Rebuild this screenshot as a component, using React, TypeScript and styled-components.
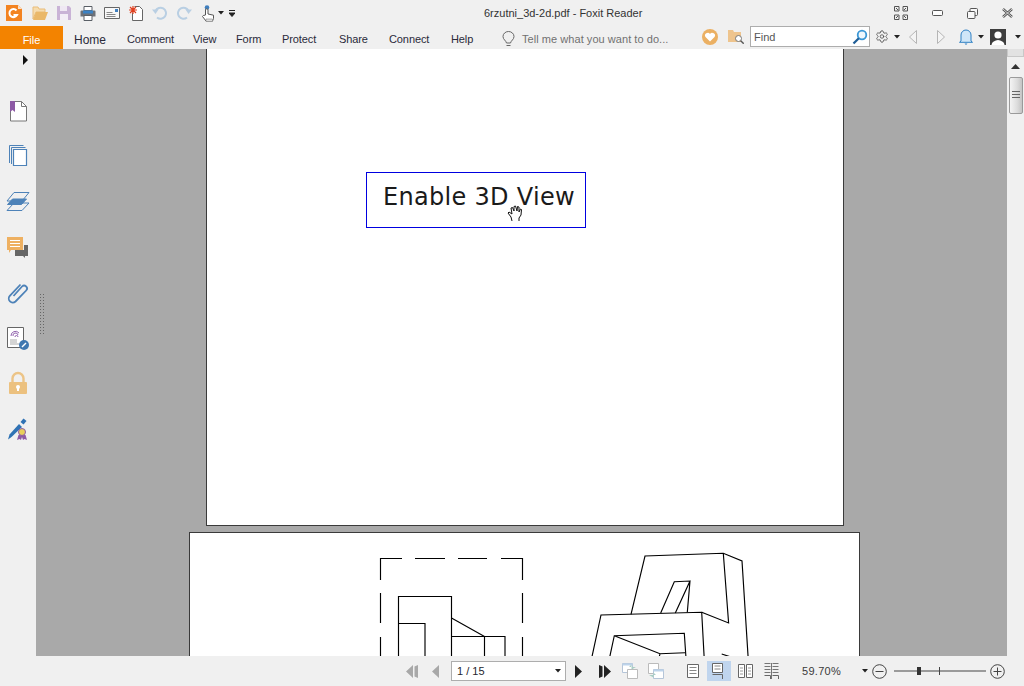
import React from 'react';
import styled, { createGlobalStyle } from 'styled-components';
import { Settings } from 'lucide-react';

const GlobalStyle = createGlobalStyle`
  html, body {
    margin: 0;
    padding: 0;
    height: 100%;
    overflow: hidden;
    background: #f0f0f0;
    font-family: "Liberation Sans", Arial, sans-serif;
  }
  #root { height: 100%; }
`;

const Window = styled.div`
  width: 1024px;
  height: 686px;
  display: flex;
  flex-direction: column;
  background: #f0f0f0;
  color: #2c2c2c;
  font-size: 11px;
`;

const TitleBar = styled.div`
  height: 26px;
  flex: none;
  display: flex;
  align-items: center;
  padding-left: 6px;
`;

const Slot = styled.div<{ $w?: number; $mr?: number }>`
  width: ${(p) => p.$w ?? 16}px;
  height: 20px;
  margin-right: ${(p) => p.$mr ?? 8}px;
  flex: none;
  display: flex;
  align-items: center;
  justify-content: center;
`;

const DocTitle = styled.div`
  margin-left: 249px;
  width: 200px;
  color: #333;
  white-space: nowrap;
`;

const WindowControls = styled.div`
  margin-left: auto;
  display: flex;
  align-items: center;
  height: 20px;
  padding-right: 11px;
  gap: 24px;
`;

const MenuBar = styled.div`
  height: 23px;
  flex: none;
  display: flex;
  align-items: center;
`;

const FileTab = styled.div`
  width: 63px;
  height: 23px;
  padding-top: 4px;
  box-sizing: border-box;
  background: #f38300;
  color: #fff;
  display: flex;
  align-items: center;
  justify-content: center;
`;

const Tabs = styled.div`
  display: flex;
  padding: 4px 0 0 11px;
`;

const Tab = styled.div<{ $w: number; $active?: boolean }>`
  width: ${(p) => p.$w}px;
  font-size: ${(p) => (p.$active ? 12 : 11)}px;
  letter-spacing: ${(p) => (p.$active ? 0 : -0.1)}px;
  color: #2a2a3a;
  white-space: nowrap;
`;

const TellMe = styled.div`
  width: 200px;
  padding-top: 3px;
  display: flex;
  align-items: center;
  gap: 7px;
  color: #707070;
  letter-spacing: 0.05px;
  white-space: nowrap;
`;

const RightTools = styled.div`
  align-self: flex-start;
  height: 21px;
  display: flex;
  align-items: center;
`;

const FindBox = styled.div`
  width: 120px;
  height: 21px;
  box-sizing: border-box;
  margin-right: 5px;
  border: 1px solid #adadad;
  background: #fff;
  display: flex;
  align-items: center;
  justify-content: space-between;
  padding: 0 1px 0 3px;
  color: #555;
`;

const Workspace = styled.div`
  flex: 1;
  min-height: 0;
  display: flex;
`;

const Sidebar = styled.div`
  width: 36px;
  flex: none;
  display: flex;
  flex-direction: column;
  align-items: center;
  padding-top: 6px;
  box-sizing: border-box;
`;

const SideToggle = styled.div`
  height: 12px;
  width: 100%;
  display: flex;
  justify-content: flex-end;
  padding-right: 8px;
  box-sizing: border-box;
  margin-bottom: 32px;
`;

const SideIcons = styled.div`
  display: flex;
  flex-direction: column;
  gap: 21.4px;
`;

const SideIcon = styled.div`
  width: 24px;
  height: 24px;
`;

const Stage = styled.div`
  position: relative;
  flex: 1;
  min-width: 0;
  background: #a9a9a9;
  overflow: hidden;
  display: flex;
  flex-direction: column;
  align-items: center;
  gap: 6px;
  padding-left: 7px;
`;

const DragGrip = styled.div`
  position: absolute;
  left: 3px;
  top: 244px;
  width: 6px;
  height: 43px;
  background-image: radial-gradient(#666 0.7px, transparent 0.8px);
  background-size: 3px 3px;
`;

const Page = styled.div<{ $w: number; $h: number }>`
  flex: none;
  box-sizing: border-box;
  width: ${(p) => p.$w}px;
  height: ${(p) => p.$h}px;
  background: #fff;
  border: 1px solid #3a3a3a;
`;

const FirstPage = styled(Page)`
  border-top: 0;
  padding: 123px 0 0 159px;
`;

const SecondPage = styled(Page)`
  border-bottom: 0;
  margin-right: 1px;
`;

const EnableBox = styled.div`
  position: relative;
  box-sizing: border-box;
  width: 220px;
  height: 56px;
  border: 1px solid #0000e0;
  display: flex;
  align-items: center;
  padding: 0 0 6px 16px;
  font-family: "DejaVu Sans", sans-serif;
  font-size: 24px;
  letter-spacing: 0.3px;
  color: #1a1a1a;
  white-space: nowrap;
`;

const HandCursor = styled.svg`
  position: absolute;
  left: 140px;
  top: 31px;
`;

const ScrollTrack = styled.div`
  width: 17px;
  flex: none;
  background: #f0f0f0;
  display: flex;
  flex-direction: column;
  align-items: center;
`;

const ScrollCap = styled.div`
  width: 100%;
  height: 8px;
  box-sizing: border-box;
  background: #e2e2e2;
  border: 1px solid #c8c8c8;
  border-top: 0;
`;

const ScrollArrow = styled.div`
  margin-top: 7px;
  height: 13px;
  display: flex;
  align-items: flex-start;
`;

const ScrollThumb = styled.div`
  width: 14px;
  height: 37px;
  box-sizing: border-box;
  border: 1px solid #9a9a9a;
  border-radius: 2px;
  background: linear-gradient(90deg, #f4f4f4, #dcdcdc 60%, #c4c4c4);
  display: flex;
  align-items: center;
  justify-content: center;
`;

const StatusBar = styled.div`
  height: 30px;
  flex: none;
  display: flex;
  align-items: center;
  padding-left: 405px;
  box-sizing: border-box;
`;

const PageSelect = styled.div`
  width: 115px;
  height: 20px;
  box-sizing: border-box;
  border: 1px solid #adadad;
  background: #fff;
  margin-right: 9px;
  padding: 0 4px 0 5px;
  display: flex;
  align-items: center;
  justify-content: space-between;
  color: #26262e;
`;

const ViewButton = styled.div<{ $active?: boolean }>`
  width: 24px;
  height: 20px;
  margin-right: 2px;
  box-sizing: border-box;
  flex: none;
  display: flex;
  align-items: center;
  justify-content: center;
  padding-right: ${(p) => (p.$active ? 4 : 0)}px;
  background: ${(p) => (p.$active ? '#c0d5ee' : 'transparent')};
`;

const ZoomValue = styled.div`
  width: 60px;
  margin-left: 17px;
  color: #3a3a3a;
  letter-spacing: 0.3px;
`;

const Caret = ({ size = 6 }: { size?: number }) => (
  <svg width={size} height={4} viewBox="0 0 6 4"><path d="M0 0h6L3 3.5z" fill="#222" /></svg>
);

const LogoIcon = () => (
  <svg width="16" height="16" viewBox="0 0 16 16">
    <path d="M0 0h12l4 4v12H0z" fill="#f38320" />
    <path d="M12 0l4 4h-4z" fill="#fbe1c8" />
    <path d="M10.5 5.5A4 4 0 1 0 11 10H7.5" fill="none" stroke="#fff" strokeWidth="2" />
  </svg>
);

const OpenIcon = () => (
  <svg width="16" height="15" viewBox="0 0 16 15">
    <path d="M1 1h5l1 2h6v3H4L1 13z" fill="#f6dcae" stroke="#e9bd7a" />
    <path d="M4 6h12l-3 8H1z" fill="#eab869" />
  </svg>
);

const SaveIcon = () => (
  <svg width="14" height="14" viewBox="0 0 14 14">
    <path d="M0 0h12l2 2v12H0z" fill="#c9b3d6" />
    <path d="M3 0h7v5H3z" fill="#efe8f3" />
    <path d="M3 8h8v6H3z" fill="#f3eef6" />
  </svg>
);

const PrintIcon = () => (
  <svg width="16" height="15" viewBox="0 0 16 15">
    <path d="M4 .5h8v4H4z" fill="#fff" stroke="#5a5f66" />
    <path d="M.5 5.5a1 1 0 0 1 1-1h13a1 1 0 0 1 1 1v5h-15z" fill="#6c7178" />
    <path d="M3 4.5h10v3H3z" fill="#3b82c4" />
    <path d="M4 9.5h8v5H4z" fill="#fff" stroke="#5a5f66" />
  </svg>
);

const MailIcon = () => (
  <svg width="16" height="12" viewBox="0 0 16 12">
    <path d="M.5.5h15v11H.5z" fill="#f8f8f8" stroke="#666" />
    <path d="M11 2h3v3h-3z" fill="#3f7fbf" />
    <path d="M2.500 5.500h6M2.500 7.500h9M2.500 9.500h9" stroke="#888" />
  </svg>
);

const NewDocIcon = () => (
  <svg width="16" height="16" viewBox="0 0 16 16">
    <path d="M6.500 1.500h5l3 3v11h-10v-8" fill="#fff" stroke="#666" />
    <path d="M5 1v8M1 5h8M2 2l6 6M8 2l-6 6" stroke="#e2401f" strokeWidth="1.200" />
  </svg>
);

const UndoIcon = ({ flip }: { flip?: boolean }) => (
  <svg width="16" height="14" viewBox="0 0 16 14" style={flip ? { transform: 'scaleX(-1)' } : undefined}>
    <path d="M3.500 5A5.500 5.500 0 1 1 5 11.500" fill="none" stroke="#b9cfe3" strokeWidth="2" />
    <path d="M0 3.500h6.500L3.500 8z" fill="#b9cfe3" />
  </svg>
);

const TouchIcon = () => (
  <svg width="16" height="17" viewBox="0 0 16 17">
    <circle cx="6" cy="2.500" r="2.300" fill="#3f7fbf" />
    <path d="M4.500 10V5a1.200 1.200 0 0 1 2.500 0v4l5.500 1.200v3.300L11.500 16H5L1.500 11.500 2.300 10.500z" fill="#fff" stroke="#555" />
    <path d="M5 14h6.500v2.500H5z" fill="#ddd" stroke="#888" strokeWidth=".6" />
  </svg>
);

const OverflowIcon = () => (
  <svg width="6" height="7" viewBox="0 0 6 7"><path d="M0 .5h6M0 3h6L3 6.500 0 3" stroke="#222" fill="#222" /></svg>
);

const FullscreenIcon = () => (
  <svg width="14" height="14" viewBox="0 0 14 14" fill="none" stroke="#555">
    <path d="M.5.500h4.500v4.500h-4.500zM9 .500h4.500v4.500H9zM.5 9H5v4.500H.5zM9 9h4.500v4.500H9z" />
    <path d="M2 2l2 2M12 2l-2 2M2 12l2-2M12 12l-2-2" />
  </svg>
);

const MinimizeIcon = () => (
  <svg width="11" height="6" viewBox="0 0 11 6"><rect x=".5" y=".5" width="10" height="5" rx="1" fill="#fdfdfd" stroke="#555" /></svg>
);

const RestoreIcon = () => (
  <svg width="11" height="11" viewBox="0 0 11 11" fill="#f8f8f8" stroke="#555">
    <rect x="3" y=".5" width="7.500" height="7" rx="1" />
    <rect x=".5" y="3.500" width="7.500" height="7" rx="1" />
  </svg>
);

const CloseIcon = () => (
  <svg width="11" height="10" viewBox="0 0 11 10">
    <path d="M1 1l9 8M10 1L1 9" stroke="#555" strokeWidth="2.400" />
    <path d="M1 1l9 8M10 1L1 9" stroke="#f4f4f4" strokeWidth=".8" />
  </svg>
);

const BulbIcon = () => (
  <svg width="13" height="17" viewBox="0 0 13 17" fill="none" stroke="#666">
    <path d="M4.500 12C4 9.500 1 8.500 1 5.500a5.500 5 0 0 1 11 0c0 3-3 4-3.500 6.500z" />
    <path d="M4.500 14.500h4" />
  </svg>
);

const HeartIcon = () => (
  <svg width="16" height="16" viewBox="0 0 16 16">
    <circle cx="8" cy="8" r="8" fill="#ebb063" />
    <path d="M8 12.500L3.500 8a2.600 2.600 0 0 1 4.500-3 2.600 2.600 0 0 1 4.500 3z" fill="#fff" />
  </svg>
);

const FolderSearchIcon = () => (
  <svg width="16" height="15" viewBox="0 0 16 15">
    <path d="M0 1h5l1 2h7v10H0z" fill="#eec48d" />
    <circle cx="10.500" cy="9.500" r="3" fill="#fff" stroke="#777" />
    <path d="M12.700 11.700l3 3" stroke="#555" strokeWidth="1.400" />
  </svg>
);

const FindIcon = () => (
  <svg width="16" height="16" viewBox="0 0 16 16">
    <circle cx="10" cy="6" r="4.300" fill="#eef7fd" stroke="#3a97d6" strokeWidth="1.800" />
    <path d="M6.800 9.200L1.500 14.500" stroke="#1f5d96" strokeWidth="2.200" />
  </svg>
);

const HollowArrow = ({ flip }: { flip?: boolean }) => (
  <svg width="8" height="14" viewBox="0 0 8 14" style={flip ? { transform: 'scaleX(-1)' } : undefined}>
    <path d="M7.500 .5v13L.5 7z" fill="#f4f4f4" stroke="#b5b5b5" />
  </svg>
);

const BellIcon = () => (
  <svg width="14" height="16" viewBox="0 0 14 16">
    <path d="M2 12V6a5 5 0 0 1 10 0v6l1.500 1.300H.5z" fill="#cfe6f8" stroke="#2f80c4" />
    <path d="M5.500 14.500h3L7 16z" fill="#2f80c4" />
  </svg>
);

const AvatarIcon = () => (
  <svg width="16" height="16" viewBox="0 0 16 16">
    <rect width="16" height="16" fill="#3d3d3d" />
    <circle cx="8" cy="6" r="3.600" fill="#fff" />
    <path d="M1.500 16c.5-3.500 3.500-4.500 6.500-5 3 .5 6 1.500 6.500 5z" fill="#fff" />
  </svg>
);

const BookmarkSideIcon = () => (
  <svg width="24" height="24" viewBox="0 0 24 24">
    <path d="M4.500 2.500h11l5 5v14.500h-16z" fill="#fff" stroke="#777" />
    <path d="M15.500 2.500v5h5" fill="none" stroke="#777" />
    <path d="M4 2h5v11l-2.500-2L4 13z" fill="#8d5aa5" />
  </svg>
);

const PagesSideIcon = () => (
  <svg width="24" height="24" viewBox="0 0 24 24" fill="#fff" stroke="#4d82b8">
    <path d="M3.500 19V1.500h14M5.500 20V3.500h14" fill="none" />
    <path d="M7.500 5.500h13v16h-13z" strokeWidth="1.200" />
  </svg>
);

const LayersSideIcon = () => (
  <svg width="24" height="24" viewBox="0 0 24 24" fill="none" stroke="#4d82b8">
    <path d="M8 2.500h15L16 11H1z" />
    <path d="M8 13h15l-7 7.500H1z" />
    <path d="M6.500 9h14l-5 5.500H1.500z" fill="#4d82b8" />
  </svg>
);

const CommentSideIcon = () => (
  <svg width="24" height="24" viewBox="0 0 24 24">
    <path d="M9 15h9v-5h4v11h-3v2l-2-2H9z" fill="#666" />
    <path d="M1 2h16v13H5l-2 3v-3H1z" fill="#eeb061" />
    <path d="M4 5.500h10M4 8.500h10M4 11.500h10" stroke="#fff" />
  </svg>
);

const ClipSideIcon = () => (
  <svg width="24" height="24" viewBox="0 0 24 24" fill="none" stroke="#4d82b8" strokeWidth="1.800">
    <path d="M7.500 15L16 5.500a2.900 2.900 0 0 1 4.200 4L9.500 20.500a4 4 0 0 1-5.700-5.600L14.500 3.500" />
  </svg>
);

const SignedDocSideIcon = () => (
  <svg width="24" height="24" viewBox="0 0 24 24">
    <path d="M1.500 1.500h16v20h-16z" fill="#fff" stroke="#666" />
    <path d="M5 10a4.500 4.500 0 0 1 8-3M7 10a2.500 2.500 0 0 1 5-1M9 11a1 1 0 0 1 3 0" fill="none" stroke="#9264ae" />
    <path d="M4 14h7M4 16h7M4 18h9" stroke="#aaa" />
    <circle cx="18" cy="19" r="5" fill="#3f77b0" />
    <path d="M16 21l4-4" stroke="#fff" strokeWidth="1.400" />
  </svg>
);

const LockSideIcon = () => (
  <svg width="24" height="24" viewBox="0 0 24 24">
    <path d="M6.500 12V7.500a5.500 5.500 0 0 1 11 0V12" fill="none" stroke="#ecc487" strokeWidth="2.400" />
    <rect x="3" y="11" width="18" height="12" rx="1" fill="#ecc17f" />
    <circle cx="12" cy="16" r="2" fill="#fff" />
    <path d="M11 16h2v4h-2z" fill="#fff" />
  </svg>
);

const CertSideIcon = () => (
  <svg width="24" height="24" viewBox="0 0 24 24">
    <path d="M2 22.500l1.500-5L13 7l3 3L5.500 20z" fill="#2f72b4" />
    <path d="M14.500 5l3-3.500 3 2.500-3 3.500z" fill="#2f72b4" />
    <path d="M12.500 18l-1.500 5 2.500-1 1.500 1 1-3 1 3 1.500-1 2.500 1-1.500-5z" fill="#8d5aa5" />
    <circle cx="16" cy="15" r="3.500" fill="#e8cf5a" stroke="#8d5aa5" />
  </svg>
);

const BarTriangle = ({ fill, flip }: { fill: string; flip?: boolean }) => (
  <svg width="12" height="13" viewBox="0 0 12 13" style={flip ? { transform: 'scaleX(-1)' } : undefined}>
    <path d="M0 0l3.500 1.500v10L0 13zM5 0l7 6.500L5 13z" fill={fill} />
  </svg>
);

const StepTriangle = ({ fill, flip }: { fill: string; flip?: boolean }) => (
  <svg width="7" height="13" viewBox="0 0 7 13" style={flip ? { transform: 'scaleX(-1)' } : undefined}>
    <path d="M0 0l7 6.500L0 13z" fill={fill} />
  </svg>
);

const HistoryIcon = ({ flip }: { flip?: boolean }) => (
  <svg width="16" height="16" viewBox="0 0 16 16">
    <path d={flip ? 'M.5 .5h10v9H.5z' : 'M.5 .5h10v10H.5z'} fill="#fff" stroke={flip ? '#b5c5d8' : '#bbb'} />
    <path d="M5.500 6.500h10v9h-10z" fill="#fff" stroke={flip ? '#bbb' : '#b5c5d8'} />
    <path d={flip ? 'M.5 .5h10v2H.5z' : 'M5.500 6.500h10v2h-10z'} fill="#bcd3ea" />
    <path d={flip ? 'M14 4H7l2.500-2.500v5z' : 'M1 12h7l-2.500-2.500v5z'} fill="#a9cfc3" />
  </svg>
);

const SinglePageIcon = () => (
  <svg width="12" height="14" viewBox="0 0 12 14" fill="#fff" stroke="#666">
    <path d="M.5.500h11v13H.5z" />
    <path d="M2.500 3.500h7M2.500 6.500h7M2.500 9.500h7" stroke="#888" />
  </svg>
);

const ContinuousIcon = () => (
  <svg width="11" height="16" viewBox="0 0 11 16" fill="#fff" stroke="#666">
    <path d="M.5.500h10v9H.5z" />
    <path d="M2.500 3h6M2.500 6h6" stroke="#888" />
    <path d="M.5 11.500h10v4.500" fill="none" />
  </svg>
);

const FacingIcon = () => (
  <svg width="15" height="14" viewBox="0 0 15 14" fill="#fff" stroke="#666">
    <path d="M.5.500h6v13h-6zM8.500.500h6v13h-6z" />
    <path d="M2 4h3M2 7h3M2 10h3M10 4h3M10 7h3M10 10h3" stroke="#999" />
  </svg>
);

const FacingContinuousIcon = () => (
  <svg width="15" height="16" viewBox="0 0 15 16" fill="none" stroke="#666">
    <path d="M.5.500h6M8.500.500h6M.5 3.500h6M8.500 3.500h6M.5 6.500h6M8.500 6.500h6M.5 9.500h6M8.500 9.500h6M7.500 0v16" strokeWidth=".9" />
    <path d="M.5 12.500h6v3.500M8.500 12.500h6v3.500" />
  </svg>
);

const RoundZoom = ({ plus }: { plus?: boolean }) => (
  <svg width="15" height="15" viewBox="0 0 15 15" fill="none" stroke="#444">
    <circle cx="7.500" cy="7.500" r="6.800" />
    <path d={plus ? 'M3.500 7.500h8M7.500 3.500v8' : 'M3.500 7.500h8'} />
  </svg>
);

const ZoomSlider = () => (
  <svg width="92" height="14" viewBox="0 0 92 14">
    <path d="M0 7h92" stroke="#444" />
    <path d="M45.500 3v8" stroke="#444" />
    <rect x="23" y="3" width="4" height="8" fill="#333" />
  </svg>
);

const Drawing = () => (
  <svg width="669" height="500" viewBox="190 533 669 500" fill="none" stroke="#000" strokeWidth="1.150">
    <path d="M380.500 580V558.500H402M415 558.500H445M458 558.500H487M501 558.500H522.500V580" />
    <path d="M380.500 593V623M380.500 637V660M522.500 593V623M522.500 637V660" />
    <path d="M398.500 660V596.500H451.500V660M398.500 623.500H425V660" />
    <path d="M451.500 618L484.500 636.500M451.500 636.500H505V660M484.500 636.500V660" />
    <path d="M631 614.300L645 556L723.300 553.300L742 561L748.300 660" />
    <path d="M723.300 553.300L728.600 623L701.700 612.300" />
    <path d="M591.700 658L601 615L701.700 612.300L704.300 660" />
    <path d="M660.700 613L674.300 581.700L690 581L675.300 613M690 581L687.300 612.300" />
    <path d="M609.500 658L614.300 635.700L684.300 633.300L686 658M614.300 635.700L660 653.700L685 652.700M660 653.700L659 658M721.700 654L730 656.700" />
  </svg>
);

const menuTabs = [
  { label: 'Home', w: 53, active: true },
  { label: 'Comment', w: 66 },
  { label: 'View', w: 43 },
  { label: 'Form', w: 46 },
  { label: 'Protect', w: 57 },
  { label: 'Share', w: 50 },
  { label: 'Connect', w: 62 },
  { label: 'Help', w: 51 },
];

const sideIcons = [
  BookmarkSideIcon,
  PagesSideIcon,
  LayersSideIcon,
  CommentSideIcon,
  ClipSideIcon,
  SignedDocSideIcon,
  LockSideIcon,
  CertSideIcon,
];

export default function App() {
  return (
    <Window>
      <GlobalStyle />
      <TitleBar>
        <Slot $mr={10}><LogoIcon /></Slot>
        <Slot><OpenIcon /></Slot>
        <Slot><SaveIcon /></Slot>
        <Slot><PrintIcon /></Slot>
        <Slot><MailIcon /></Slot>
        <Slot><NewDocIcon /></Slot>
        <Slot><UndoIcon /></Slot>
        <Slot $mr={9}><UndoIcon flip /></Slot>
        <Slot $mr={1}><TouchIcon /></Slot>
        <Slot $w={6} $mr={5}><Caret /></Slot>
        <Slot $w={6} $mr={0}><OverflowIcon /></Slot>
        <DocTitle>6rzutni_3d-2d.pdf - Foxit Reader</DocTitle>
        <WindowControls>
          <FullscreenIcon />
          <MinimizeIcon />
          <RestoreIcon />
          <CloseIcon />
        </WindowControls>
      </TitleBar>
      <MenuBar>
        <FileTab>File</FileTab>
        <Tabs>
          {menuTabs.map((t) => (
            <Tab key={t.label} $w={t.w} $active={t.active}>{t.label}</Tab>
          ))}
        </Tabs>
        <TellMe><BulbIcon />Tell me what you want to do...</TellMe>
        <RightTools>
          <Slot $mr={10}><HeartIcon /></Slot>
          <Slot $mr={6}><FolderSearchIcon /></Slot>
          <FindBox>Find<FindIcon /></FindBox>
          <Slot $w={14} $mr={5}><Settings size={15} strokeWidth={1.3} color="#444" /></Slot>
          <Slot $w={6} $mr={9}><Caret /></Slot>
          <Slot $w={8} $mr={20}><HollowArrow /></Slot>
          <Slot $w={8} $mr={14}><HollowArrow flip /></Slot>
          <Slot $w={14} $mr={5}><BellIcon /></Slot>
          <Slot $w={6} $mr={6}><Caret /></Slot>
          <Slot $mr={9}><AvatarIcon /></Slot>
          <Slot $w={6} $mr={0}><Caret /></Slot>
        </RightTools>
      </MenuBar>
      <Workspace>
        <Sidebar>
          <SideToggle>
            <svg width="5" height="10" viewBox="0 0 5 10"><path d="M0 0l5 5-5 5z" fill="#111" /></svg>
          </SideToggle>
          <SideIcons>
            {sideIcons.map((Icon, i) => (
              <SideIcon key={i}><Icon /></SideIcon>
            ))}
          </SideIcons>
        </Sidebar>
        <Stage>
          <DragGrip />
          <FirstPage $w={638} $h={477}>
            <EnableBox>
              Enable 3D View
              <HandCursor width="17" height="18" viewBox="0 0 17 18">
                <path d="M5 17l-1-4-3-4 1-1 3 2-1-6 1.500-.5L7 7V2.500L8.500 2 10 7l.5-4.500L12 3v5l1.500-3 1 .5L14 11l-2 3v3" fill="#fff" stroke="#111" />
              </HandCursor>
            </EnableBox>
          </FirstPage>
          <SecondPage $w={671} $h={500}>
            <Drawing />
          </SecondPage>
        </Stage>
        <ScrollTrack>
          <ScrollCap />
          <ScrollArrow>
            <svg width="9" height="5" viewBox="0 0 9 5"><path d="M0 5l4.500-5L9 5z" fill="#333" /></svg>
          </ScrollArrow>
          <ScrollThumb>
            <svg width="8" height="9" viewBox="0 0 8 9"><path d="M0 .5h8M0 3.500h8M0 6.500h8" stroke="#666" /></svg>
          </ScrollThumb>
        </ScrollTrack>
      </Workspace>
      <StatusBar>
        <Slot $w={13} $mr={14}><BarTriangle fill="#a8a8a8" flip /></Slot>
        <Slot $w={7} $mr={12}><StepTriangle fill="#a8a8a8" flip /></Slot>
        <PageSelect>1 / 15<Caret /></PageSelect>
        <Slot $w={7} $mr={16}><StepTriangle fill="#222" /></Slot>
        <Slot $w={13} $mr={11}><BarTriangle fill="#222" /></Slot>
        <Slot $mr={10}><HistoryIcon flip /></Slot>
        <Slot $mr={17}><HistoryIcon /></Slot>
        <ViewButton><SinglePageIcon /></ViewButton>
        <ViewButton $active><ContinuousIcon /></ViewButton>
        <ViewButton><FacingIcon /></ViewButton>
        <ViewButton><FacingContinuousIcon /></ViewButton>
        <ZoomValue>59.70%</ZoomValue>
        <Slot $w={6} $mr={4}><Caret /></Slot>
        <Slot $w={15} $mr={7}><RoundZoom /></Slot>
        <Slot $w={92} $mr={4}><ZoomSlider /></Slot>
        <Slot $w={15} $mr={0}><RoundZoom plus /></Slot>
      </StatusBar>
    </Window>
  );
}
